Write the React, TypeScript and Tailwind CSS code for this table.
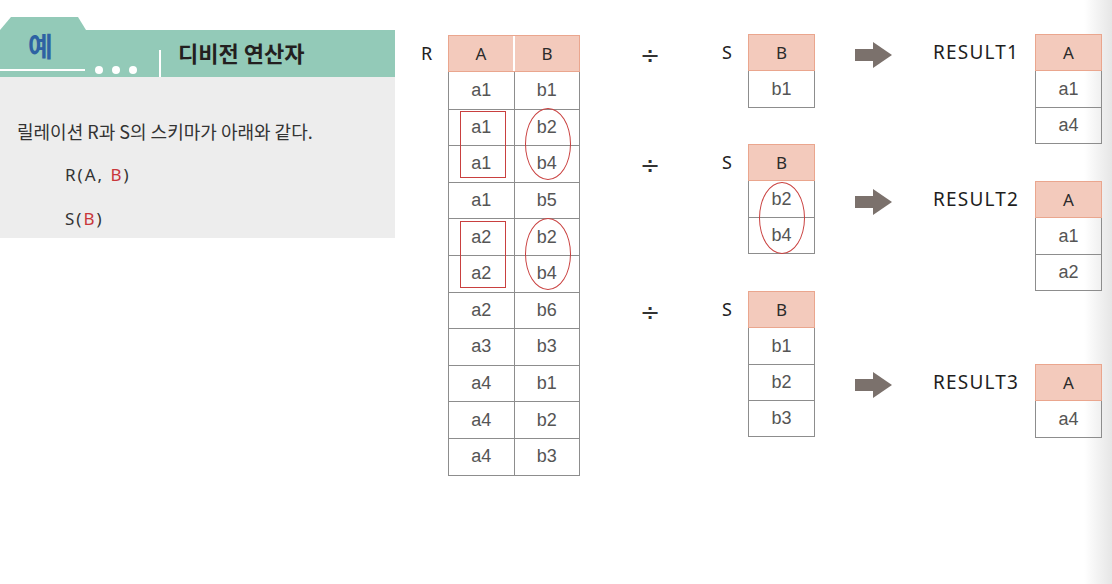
import React from 'react';

const TEAL = 'bg-[#93cab8]';

function Header({ cols }: { cols: string[] }) {
  return (
    <div className="flex h-[37px] border border-[#eaa68e] bg-[#f3cabc]">
      {cols.map((c, i) => (
        <div
          key={c}
          className={`flex flex-1 items-center justify-center text-[17px] text-[#2b2b2b] ${i > 0 ? 'border-l-2 border-white' : ''}`}
          style={{ fontFamily: '"Noto Sans", sans-serif' }}
        >
          {c}
        </div>
      ))}
    </div>
  );
}

function Table({
  cols,
  rows,
  rowH,
  width,
  children,
}: {
  cols: string[];
  rows: string[][];
  rowH: string;
  width: string;
  children?: React.ReactNode;
}) {
  return (
    <div className={`relative ${width}`}>
      <Header cols={cols} />
      <div className="border-x border-b border-[#8d8d8d]">
        {rows.map((r, i) => (
          <div key={i} className={`flex ${rowH} ${i > 0 ? 'border-t border-[#8d8d8d]' : ''}`}>
            {r.map((v, j) => (
              <div
                key={j}
                className={`flex flex-1 items-center justify-center text-[18px] text-[#555] ${j > 0 ? 'border-l border-[#8d8d8d]' : ''}`}
                style={{ fontFamily: '"Liberation Sans", Arial, sans-serif' }}
              >
                {v}
              </div>
            ))}
          </div>
        ))}
      </div>
      {children}
    </div>
  );
}

function Arrow() {
  return (
    <svg width="37" height="26" viewBox="0 0 37 26">
      <rect x="0" y="7" width="19" height="12" fill="#7b716c" />
      <polygon points="18,0 37,13 18,26" fill="#7b716c" />
    </svg>
  );
}

const labelFont = { fontFamily: '"Noto Sans", "Noto Sans CJK KR", sans-serif' };

function DivRow({
  sRows,
  resultName,
  resultRows,
  offset,
  ellipse,
}: {
  sRows: string[][];
  resultName: string;
  resultRows: string[][];
  offset: string;
  ellipse?: boolean;
}) {
  return (
    <div className="flex items-start">
      <div
        className="flex h-[37px] w-[16px] items-center justify-center pt-[6px] text-[24px] text-[#333]"
        style={{ fontFamily: '"DejaVu Sans", sans-serif' }}
      >
        ÷
      </div>
      <div className="ml-[64px] flex h-[37px] w-[26px] items-center text-[18px] text-[#222]" style={labelFont}>
        S
      </div>
      <Table cols={['B']} rows={sRows} rowH="h-[36px]" width="w-[67px]">
        {ellipse && (
          <div className="absolute left-[11px] top-[38px] h-[72px] w-[46px] rounded-[50%] border-[1.5px] border-[#c9403f]" />
        )}
      </Table>
      <div className={`ml-[40px] flex items-start ${offset}`}>
        <div className="flex h-[37px] items-center pt-[5px]">
          <Arrow />
        </div>
        <div className="ml-[41px] flex h-[37px] w-[102px] items-center text-[19px] tracking-[1.2px] text-[#1e1e1e]" style={labelFont}>
          {resultName}
        </div>
        <Table cols={['A']} rows={resultRows} rowH="h-[36px]" width="w-[67px]" />
      </div>
    </div>
  );
}

export default function App() {
  const rRows = [
    ['a1', 'b1'],
    ['a1', 'b2'],
    ['a1', 'b4'],
    ['a1', 'b5'],
    ['a2', 'b2'],
    ['a2', 'b4'],
    ['a2', 'b6'],
    ['a3', 'b3'],
    ['a4', 'b1'],
    ['a4', 'b2'],
    ['a4', 'b3'],
  ];

  return (
    <div
      className="flex h-[584px] w-[1112px] bg-[linear-gradient(90deg,#ffffff_97.5%,#e6e6e6)]"
      style={{ fontFamily: '"Noto Sans CJK KR", "Noto Sans", sans-serif' }}
    >
      {/* 예 box */}
      <div className="mt-[17px] w-[395px]">
        <div className={`h-[13px] w-[86px] ${TEAL} [clip-path:polygon(11px_0,78px_0,86px_100%,0_100%)]`} />
        <div className={`flex h-[47px] ${TEAL}`}>
          <div className="flex w-[159px] flex-col">
            <div className="h-[30px] pl-[28px] text-[27px] font-bold leading-[32px] text-[#2e62a3]">예</div>
            <div className="mt-[6px] flex items-center">
              <div className="h-[2px] w-[85px] bg-white" />
              <div className="ml-[10px] h-[8px] w-[8px] rounded-full bg-white" />
              <div className="ml-[9px] h-[8px] w-[8px] rounded-full bg-white" />
              <div className="ml-[9px] h-[8px] w-[8px] rounded-full bg-white" />
            </div>
          </div>
          <div className="mt-[20px] h-[27px] w-[2px] bg-white" />
          <div className="ml-[17px] flex h-[44px] items-center text-[22px] font-bold text-[#231f20]">디비전 연산자</div>
        </div>
        <div className="h-[161px] bg-[#ededed] pl-[17px] pt-[32px] text-[#333]">
          <div className="flex h-[44px] items-center text-[18px]">릴레이션 R과 S의 스키마가 아래와 같다.</div>
          <div className="flex h-[44px] items-center pl-[48px] text-[17px] tracking-[2px]" style={labelFont}>
            R(A,&nbsp;<span className="text-[#c9373a]">B</span>)
          </div>
          <div className="flex h-[44px] items-center pl-[48px] text-[17px] tracking-[2px]" style={labelFont}>
            S(<span className="text-[#c9373a]">B</span>)
          </div>
        </div>
      </div>

      {/* diagram */}
      <div className="flex items-start pt-[34px]">
        <div className="ml-[26px] mt-[1px] flex items-start">
          <div className="flex h-[37px] w-[27px] items-center text-[18px] text-[#222]" style={labelFont}>
            R
          </div>
          <Table cols={['A', 'B']} rows={rRows} rowH="h-[36.6px]" width="w-[132px]">
            <div className="absolute left-[12px] top-[76px] h-[67px] w-[46px] border-[1.5px] border-[#c9403f]" />
            <div className="absolute left-[77px] top-[73px] h-[72px] w-[46px] rounded-[50%] border-[1.5px] border-[#c9403f]" />
            <div className="absolute left-[12px] top-[186px] h-[67px] w-[46px] border-[1.5px] border-[#c9403f]" />
            <div className="absolute left-[77px] top-[183px] h-[72px] w-[46px] rounded-[50%] border-[1.5px] border-[#c9403f]" />
          </Table>
        </div>
        <div className="ml-[62px] flex flex-col">
          <DivRow sRows={[['b1']]} resultName="RESULT1" resultRows={[['a1'], ['a4']]} offset="mt-0" />
          <DivRow sRows={[['b2'], ['b4']]} resultName="RESULT2" resultRows={[['a1'], ['a2']]} offset="mt-[37px]" ellipse />
          <DivRow sRows={[['b1'], ['b2'], ['b3']]} resultName="RESULT3" resultRows={[['a4']]} offset="mt-[73px]" />
        </div>
      </div>
    </div>
  );
}
